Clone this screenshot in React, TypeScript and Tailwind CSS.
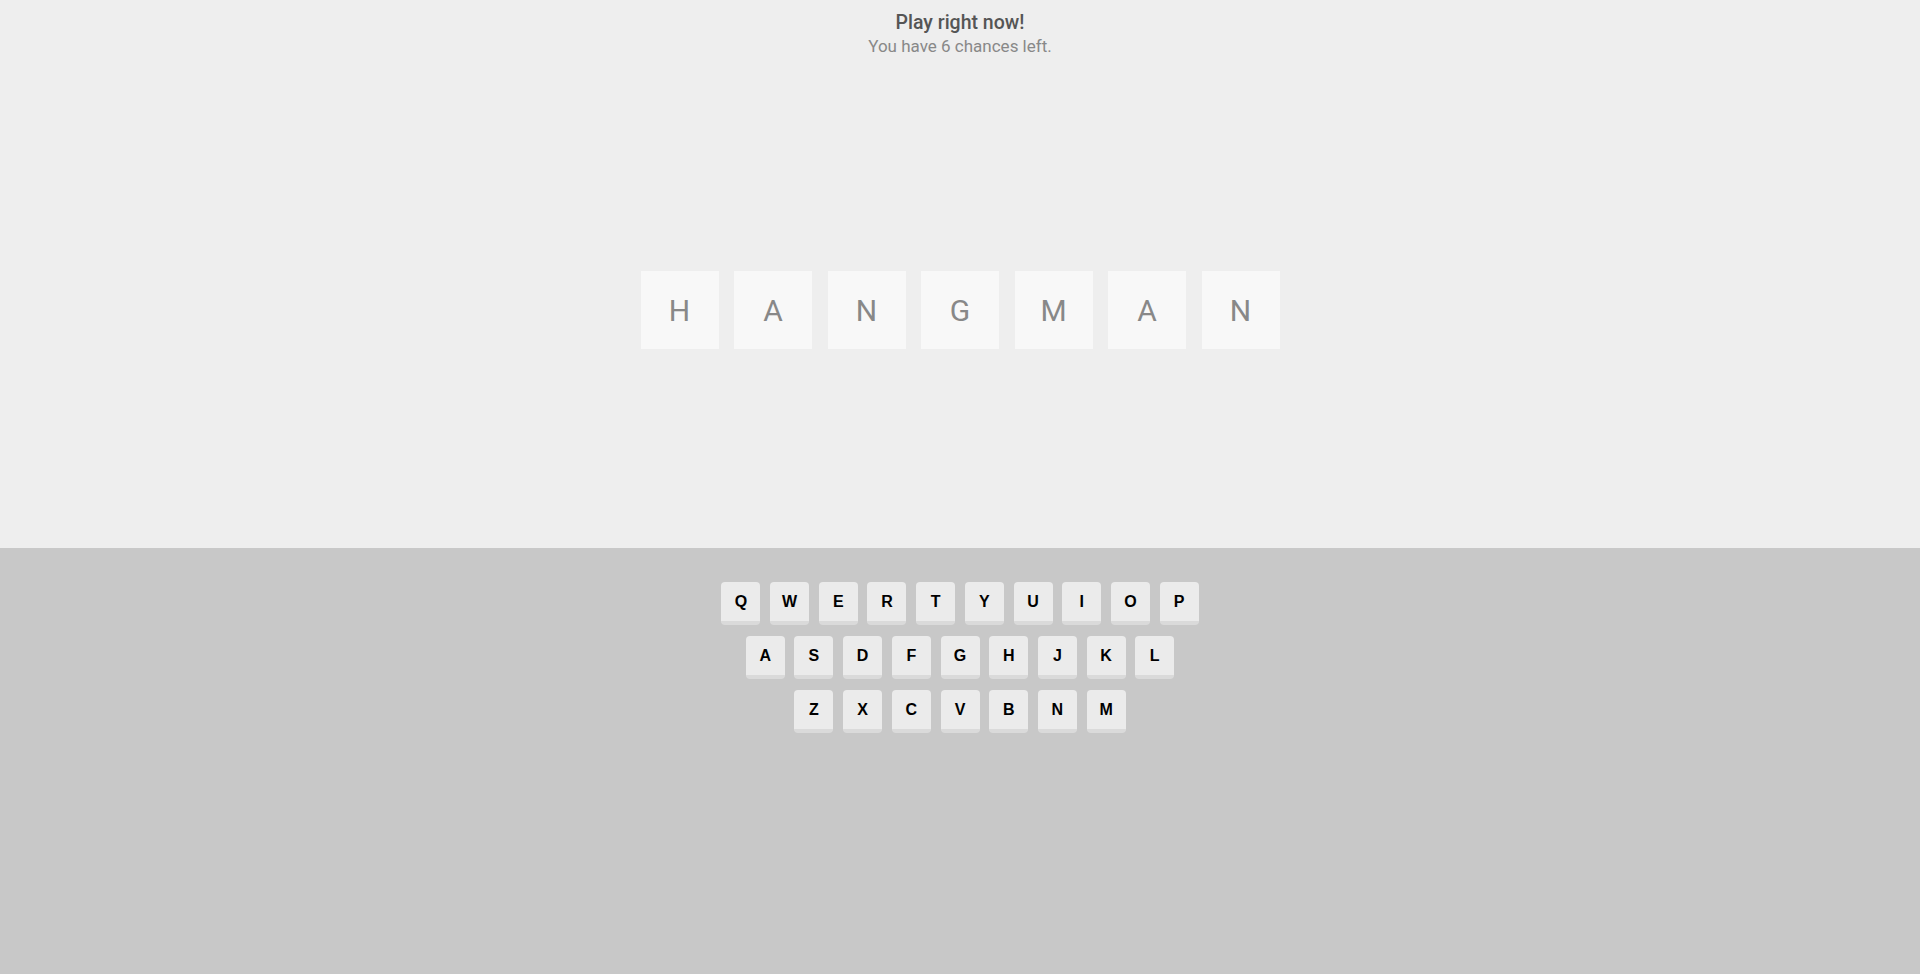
const word = ["H", "A", "N", "G", "M", "A", "N"];

const rows = [
  ["Q", "W", "E", "R", "T", "Y", "U", "I", "O", "P"],
  ["A", "S", "D", "F", "G", "H", "J", "K", "L"],
  ["Z", "X", "C", "V", "B", "N", "M"],
];

const App = () => {
  return (
    <div className="min-h-screen flex flex-col bg-[#c8c8c8] font-['Roboto',sans-serif]">
      <section className="h-[548px] bg-[#eeeeee] flex flex-col items-center">
        <div className="pt-[10px] text-center">
          <h1 className="text-[19.5px] leading-[25px] font-medium text-[#555555]">Play right now!</h1>
          <p className="text-[17px] leading-[22px] text-[#888888]">You have 6 chances left.</p>
        </div>

        <div className="mt-[214px] flex gap-[15.5px]">
          {word.map((letter, i) => (
            <div
              key={i}
              className="w-[78px] h-[78px] bg-[#f8f8f8] flex items-center justify-center text-[30px] text-[#888888]"
            >
              {letter}
            </div>
          ))}
        </div>
      </section>

      <section className="flex-1 pt-[34px] flex flex-col items-center gap-[11px]">
        {rows.map((row, r) => (
          <div key={r} className="flex gap-[9.7px]">
            {row.map((key) => (
              <button
                key={key}
                className="w-[39px] h-[43px] rounded-[4px] bg-[#ebebeb] border-b-[4px] border-[#dadada] flex items-center justify-center font-['Liberation_Sans',Arial,sans-serif] font-bold text-[16px] text-black"
              >
                {key}
              </button>
            ))}
          </div>
        ))}
      </section>
    </div>
  );
};

export default App;
